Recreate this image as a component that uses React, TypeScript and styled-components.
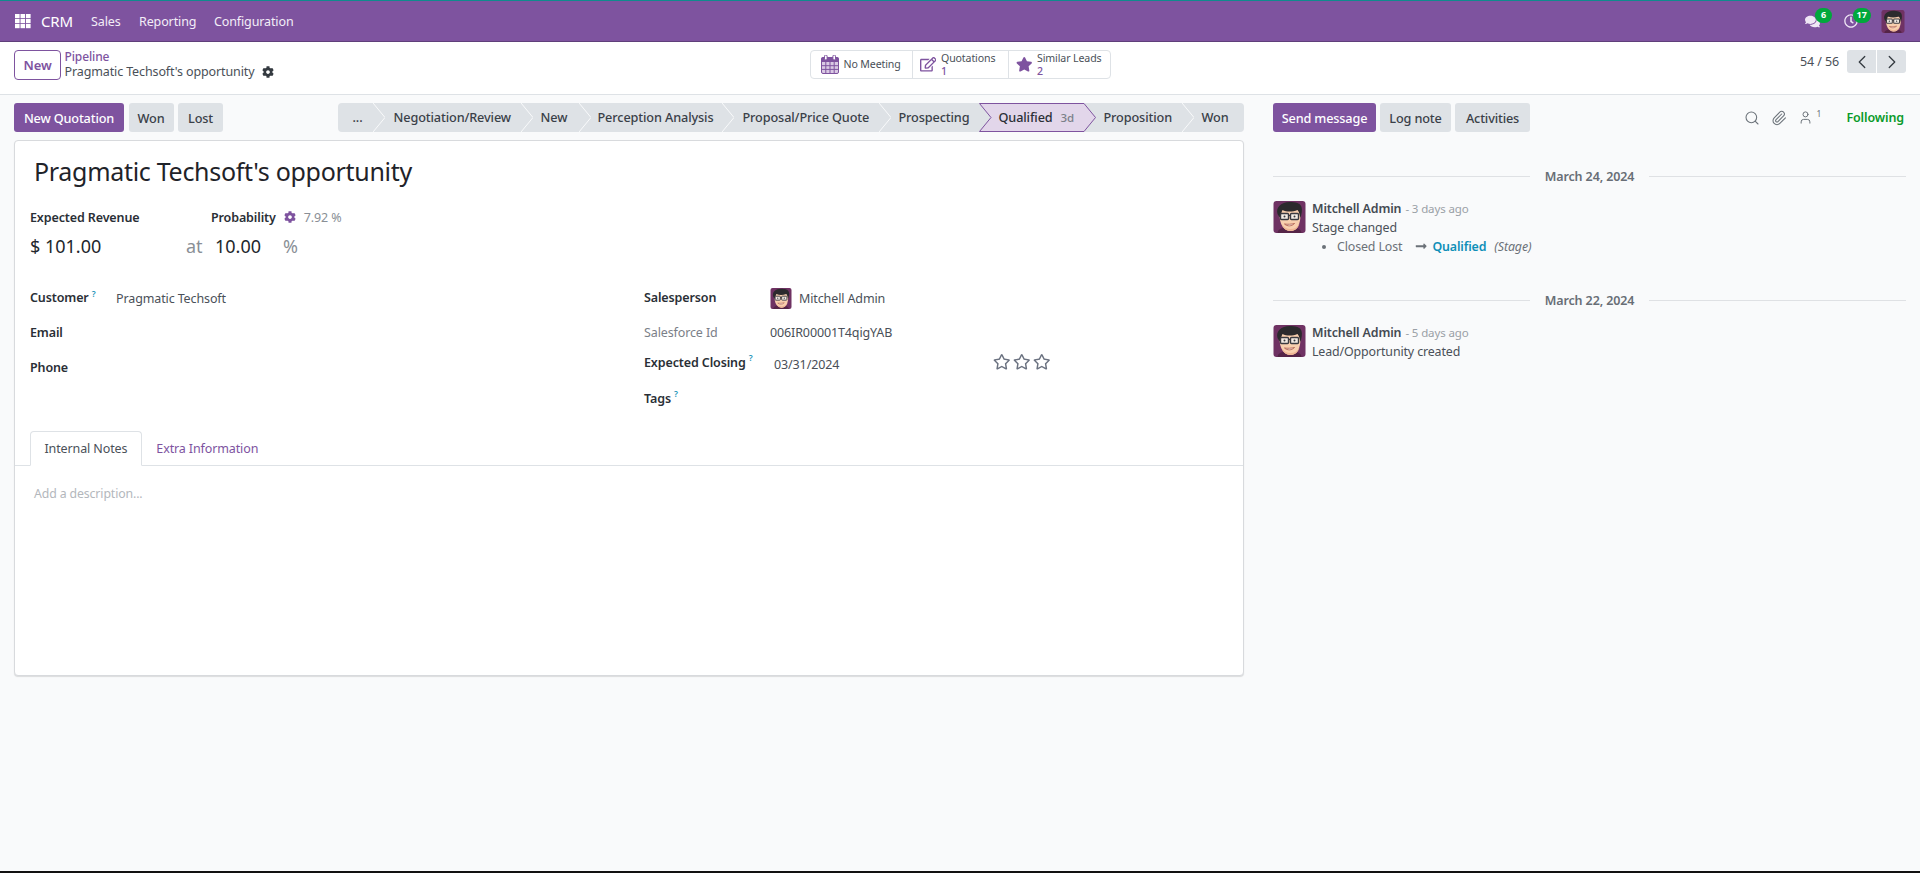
import React from "react";
import styled, { createGlobalStyle } from "styled-components";
import {
  FaRegEdit,
  FaStar,
  FaRegStar,
  FaCog,
  FaComments,
  FaRegClock,
  FaLongArrowAltRight,
} from "react-icons/fa";
import { ChevronLeft, ChevronRight, Search, Paperclip, User } from "lucide-react";

const PURPLE = "#7e539f";

const Global = createGlobalStyle`
  html, body { margin: 0; padding: 0; height: 100%; background: #f9fafb; }
  body {
    font-family: "Noto Sans", "Open Sans", sans-serif;
    font-size: 13px;
    letter-spacing: -0.12px;
    color: #4a5058;
  }
  * { box-sizing: border-box; }
`;

const Page = styled.div`
  width: 1920px;
  height: 873px;
  display: flex;
  flex-direction: column;
  overflow: hidden;
`;

/* ---------- navbar ---------- */
const Navbar = styled.header`
  height: 42px;
  flex: none;
  display: flex;
  align-items: center;
  background: ${PURPLE};
  border-top: 1px solid #0f8a8d;
  border-bottom: 1px solid #5f3f7a;
  color: #fff;
  padding: 0 15px;
`;
const AppsIcon = styled.svg`
  width: 16px;
  height: 15px;
  flex: none;
  margin-right: 10px;
`;
const Brand = styled.span`
  font-size: 15px;
  width: 50px;
  color: #fff;
`;
const NavItem = styled.span<{ $w: number }>`
  font-size: 12.5px;
  width: ${(p) => p.$w}px;
  color: #f3edf7;
`;
const NavRight = styled.div`
  margin-left: auto;
  display: flex;
  align-items: center;
`;
const SysIcon = styled.span<{ $w: number; $size: number }>`
  position: relative;
  width: ${(p) => p.$w}px;
  height: 24px;
  display: flex;
  align-items: center;
  color: #efe6f5;
  font-size: ${(p) => p.$size}px;
`;
const Badge = styled.span<{ $left: number; $w: number }>`
  position: absolute;
  left: ${(p) => p.$left}px;
  top: -1px;
  width: ${(p) => p.$w}px;
  height: 14.5px;
  border-radius: 8px;
  background: #00a83c;
  color: #fff;
  font-size: 9px;
  font-weight: 700;
  line-height: 14.5px;
  text-align: center;
  letter-spacing: 0;
`;

/* ---------- control panel ---------- */
const ControlPanel = styled.div`
  height: 53px;
  flex: none;
  display: grid;
  grid-template-columns: 1fr auto 1fr;
  background: #fff;
  border-bottom: 1px solid #dee2e6;
  padding: 8px 14px 0;
  align-items: start;
`;
const CpLeft = styled.div`
  display: flex;
  align-items: flex-start;
  gap: 3.5px;
`;
const NewButton = styled.button`
  width: 47px;
  height: 30px;
  background: #fff;
  border: 1px solid ${PURPLE};
  border-radius: 4px;
  color: ${PURPLE};
  font: 600 13px "Noto Sans", sans-serif;
  letter-spacing: -0.1px;
  padding: 0;
`;
const Breadcrumbs = styled.div`
  display: flex;
  flex-direction: column;
  line-height: 14.5px;
`;
const Crumb = styled.span`
  color: ${PURPLE};
  font-size: 12px;
  font-weight: 500;
`;
const CrumbTitle = styled.span`
  display: flex;
  align-items: center;
  gap: 8px;
  font-size: 12.5px;
  color: #4a5058;
  svg {
    color: #343a40;
    font-size: 12px;
  }
`;
const StatGroup = styled.div`
  display: flex;
  height: 29px;
  border: 1px solid #dee2e6;
  border-radius: 4px;
  width: 301px;
`;
const StatButton = styled.div<{ $w: number; $pl: number }>`
  width: ${(p) => p.$w}px;
  display: flex;
  align-items: center;
  gap: 5px;
  padding-left: ${(p) => p.$pl}px;
  font-size: 10.6px;
  line-height: 13px;
  color: #4a5058;
  white-space: nowrap;
  & + & {
    border-left: 1px solid #dee2e6;
  }
  svg {
    color: ${PURPLE};
    font-size: 16.5px;
    flex: none;
  }
`;
const CalendarIcon = styled.svg`
  width: 18px;
  height: 19px;
`;
const StatText = styled.span`
  display: flex;
  flex-direction: column;
`;
const StatValue = styled.span`
  color: ${PURPLE};
  font-weight: 500;
`;
const Pager = styled.div`
  display: flex;
  justify-content: flex-end;
  align-items: center;
  height: 23px;
  gap: 1px;
`;
const PagerText = styled.span`
  font-size: 12.5px;
  margin-right: 7px;
`;
const PagerButton = styled.button`
  width: 29px;
  height: 23px;
  border: 0;
  padding: 0;
  background: #dee2e6;
  color: #343a40;
  display: flex;
  align-items: center;
  justify-content: center;
  &:first-of-type {
    border-radius: 3px 0 0 3px;
  }
  &:last-of-type {
    border-radius: 0 3px 3px 0;
  }
`;

/* ---------- main ---------- */
const Main = styled.main`
  flex: 1;
  display: flex;
  gap: 29px;
  padding: 8px 14px 0;
  min-height: 0;
`;
const FormColumn = styled.section`
  width: 1230px;
  flex: none;
  display: flex;
  flex-direction: column;
  gap: 8px;
`;
const ActionRow = styled.div`
  display: flex;
  height: 29px;
  align-items: stretch;
`;
const Btn = styled.button<{ $primary?: boolean; $w: number; $gap?: number }>`
  width: ${(p) => p.$w}px;
  margin-right: ${(p) => p.$gap ?? 4}px;
  height: 29px;
  flex: none;
  border: 0;
  border-radius: 3px;
  padding: 0;
  background: ${(p) => (p.$primary ? PURPLE : "#dee2e6")};
  color: ${(p) => (p.$primary ? "#fff" : "#3a4048")};
  font: 500 12.7px "Noto Sans", sans-serif;
  letter-spacing: -0.15px;
`;
const StatusBar = styled.div`
  margin-left: auto;
  width: 906.5px;
  display: flex;
  background: #dee2e6;
  border-radius: 4px;
  height: 29px;
`;
const Stage = styled.span<{ $w: number; $pl?: number }>`
  width: ${(p) => p.$w}px;
  flex: none;
  padding-left: ${(p) => p.$pl ?? 8}px;
  line-height: 29px;
  font-weight: 500;
  font-size: 12.7px;
  color: #3a4048;
  white-space: nowrap;
`;
const Chevron = styled.svg`
  width: 12px;
  height: 29px;
  flex: none;
`;
const ActiveStage = styled.span`
  position: relative;
  width: 117px;
  flex: none;
  padding-left: 20px;
  line-height: 29px;
  font-weight: 500;
  font-size: 12.7px;
  color: #2a2f36;
  white-space: nowrap;
  display: flex;
  gap: 8px;
  > span {
    position: relative;
  }
`;
const ActiveShape = styled.svg`
  position: absolute;
  left: 0;
  top: 0;
  width: 117px;
  height: 29px;
`;
const Duration = styled.span`
  font-size: 11.5px;
  font-weight: 500;
  color: #7b8088;
`;

const Sheet = styled.div`
  height: 536px;
  flex: none;
  background: #fff;
  border: 1px solid #d8dadd;
  border-radius: 4px;
  box-shadow: 0 1px 1px rgba(0, 0, 0, 0.12);
  display: flex;
  flex-direction: column;
`;
const Title = styled.h1`
  margin: 12px 0 0 19px;
  height: 36px;
  font-size: 25px;
  font-weight: 400;
  line-height: 36px;
  color: #1f2329;
  letter-spacing: -0.3px;
`;
const KpiLabels = styled.div`
  margin: 19px 0 0 15px;
  display: flex;
  align-items: center;
  height: 18px;
`;
const KpiLabel = styled.span<{ $w?: number }>`
  width: ${(p) => (p.$w ? `${p.$w}px` : "auto")};
  font-weight: 600;
  color: #2a2f36;
  font-size: 12.5px;
`;
const ProbCog = styled.span`
  margin: 0 8px;
  color: ${PURPLE};
  font-size: 12px;
  display: flex;
`;
const ProbValue = styled.span`
  color: #8a8f96;
  font-size: 12.5px;
`;
const KpiValues = styled.div`
  margin: 7px 0 0 15px;
  display: flex;
  align-items: center;
  height: 26px;
  font-size: 18px;
  color: #22262c;
  letter-spacing: 0;
`;
const KpiCell = styled.span<{ $w: number; $muted?: boolean }>`
  width: ${(p) => p.$w}px;
  color: ${(p) => (p.$muted ? "#8a8f96" : "inherit")};
`;
const FieldGrid = styled.div`
  margin: 21px 0 0 15px;
  display: grid;
  grid-template-columns: 614px 1fr;
`;
const FieldColumn = styled.div`
  display: flex;
  flex-direction: column;
`;
const Field = styled.div<{ $h?: number }>`
  height: ${(p) => p.$h ?? 35}px;
  display: flex;
  align-items: center;
`;
const FieldLabel = styled.span<{ $w: number; $muted?: boolean }>`
  width: ${(p) => p.$w}px;
  flex: none;
  font-weight: ${(p) => (p.$muted ? 400 : 600)};
  color: ${(p) => (p.$muted ? "#7b8088" : "#2a2f36")};
  font-size: 12.5px;
`;
const Help = styled.sup`
  color: #1a93b8;
  font-size: 8.5px;
  font-weight: 600;
  margin-left: 3px;
  line-height: 0;
`;
const FieldValue = styled.span<{ $nudge?: number }>`
  display: flex;
  align-items: center;
  gap: 7px;
  font-size: 12.5px;
  color: #4a5058;
  margin-top: ${(p) => p.$nudge ?? 1}px;
  white-space: nowrap;
`;
const Stars = styled.span`
  display: flex;
  gap: 2.5px;
  margin-left: 154px;
  color: #6b7280;
  font-size: 17.5px;
`;
const Tabs = styled.div`
  margin-top: 9px;
  height: 35px;
  flex: none;
  display: flex;
  padding-left: 15px;
  border-bottom: 1px solid #dee2e6;
`;
const Tab = styled.span<{ $active?: boolean }>`
  height: 35px;
  padding: 0 13.5px;
  line-height: 33px;
  font-size: 12.5px;
  color: ${(p) => (p.$active ? "#4a5058" : PURPLE)};
  background: ${(p) => (p.$active ? "#fff" : "transparent")};
  border: 1px solid ${(p) => (p.$active ? "#dee2e6" : "transparent")};
  border-bottom-color: ${(p) => (p.$active ? "#fff" : "transparent")};
  border-radius: 4px 4px 0 0;
`;
const Description = styled.div`
  margin: 19px 0 0 19px;
  font-size: 12.3px;
  color: #b3b7bc;
`;

/* ---------- chatter ---------- */
const Chatter = styled.aside`
  flex: 1;
  display: flex;
  flex-direction: column;
  min-width: 0;
`;
const ChatterTop = styled.div`
  display: flex;
  height: 29px;
  align-items: center;
`;
const ChatterTools = styled.div`
  margin-left: auto;
  display: flex;
  align-items: center;
  color: #6c737a;
  font-size: 13px;
`;
const Tool = styled.span<{ $w: number }>`
  width: ${(p) => p.$w}px;
  display: flex;
  align-items: center;
`;
const Sup = styled.span`
  font-size: 8.5px;
  margin: -8px 0 0 3px;
`;
const Following = styled.span`
  color: #0a9a2a;
  font-weight: 600;
  font-size: 12.5px;
  margin-right: 2px;
`;
const DateSep = styled.div<{ $top: number }>`
  margin-top: ${(p) => p.$top}px;
  display: flex;
  align-items: center;
  gap: 15px;
  height: 18px;
  font-weight: 600;
  font-size: 12.5px;
  color: #686e76;
  white-space: nowrap;
  &::before,
  &::after {
    content: "";
    flex: 1;
    height: 1px;
    background: #dfe1e4;
  }
`;
const Message = styled.article`
  margin-top: 16px;
  display: flex;
  gap: 6px;
`;
const MsgBody = styled.div`
  display: flex;
  flex-direction: column;
  line-height: 19px;
  font-size: 12.4px;
  margin-top: -2px;
`;
const MsgHead = styled.div`
  display: flex;
  align-items: baseline;
  gap: 4px;
`;
const Author = styled.span`
  font-weight: 600;
  color: #444a52;
`;
const Ago = styled.span`
  color: #9aa0a6;
  font-size: 11.5px;
`;
const Tracking = styled.ul`
  margin: 0;
  padding: 0 0 0 25px;
  list-style: disc;
  li {
    color: #6b7178;
  }
`;
const TrackLine = styled.span`
  display: flex;
  align-items: center;
`;
const OldValue = styled.span`
  width: 78px;
  color: #6b7178;
`;
const NewValue = styled.span`
  color: #0f8fb8;
  font-weight: 600;
  margin-left: 5px;
`;
const FieldName = styled.em`
  color: #6b7178;
  margin-left: 8px;
`;
const AvatarSvg = styled.svg<{ $w: number; $h: number }>`
  width: ${(p) => p.$w}px;
  height: ${(p) => p.$h}px;
  flex: none;
  display: block;
`;
const BottomBar = styled.div`
  height: 2.5px;
  background: #111;
  flex: none;
`;

function Avatar({ w, h }: { w: number; h: number }) {
  return (
    <AvatarSvg $w={w} $h={h} viewBox="0 0 32 32">
      <rect width="32" height="32" rx="3" fill="#6f3263" />
      <path d="M4 32c0-3 3-5 7-5h10c4 0 7 2 7 5z" fill="#552447" />
      <path d="M6 13c0 10 4 17 11 17s10-7 10-17l-2-4H8z" fill="#f8cfae" />
      <path d="M8 23c2 5 5 7 9 7s7-2 9-7c-2 3-5 5-9 5s-7-2-9-5z" fill="#eeb594" />
      <path d="M4 13C2 6 8 1 16 1c6 0 11 1 12 5 1 3 0 7-1 11-1-3-1-6-3-8-5 2-11 2-15 0-1 2-2 5-2 8-1-1-2-2-3-4z" fill="#2b2a2d" />
      <rect x="7" y="12.5" width="8" height="6" rx="1" fill="#f3ece4" stroke="#3a3a40" strokeWidth="1.4" />
      <rect x="17" y="12.5" width="8" height="6" rx="1" fill="#f3ece4" stroke="#3a3a40" strokeWidth="1.4" />
      <path d="M15 14.5h2" stroke="#3a3a40" strokeWidth="1.2" />
      <circle cx="11" cy="15.5" r="1" fill="#3a3a40" />
      <circle cx="21" cy="15.5" r="1" fill="#3a3a40" />
      <path d="M11 23c3 2.6 7 2.4 10-.5-3 .8-7 1-10 .5z" fill="#fff" stroke="#a8503f" strokeWidth=".8" />
    </AvatarSvg>
  );
}

function Sep() {
  return (
    <Chevron viewBox="0 0 12 29">
      <polyline points="0,0 12,14.5 0,29" fill="none" stroke="#f9fafb" strokeWidth="1" />
    </Chevron>
  );
}

function Calendar() {
  return (
    <CalendarIcon viewBox="0 0 18 19">
      <rect x="0.5" y="2.5" width="17" height="16" rx="1.5" fill="#d9c9e4" stroke={PURPLE} />
      <rect x="0.5" y="2.5" width="17" height="4.5" fill={PURPLE} />
      <rect x="3.5" y="0" width="2.6" height="5" rx="1.2" fill="#fff" stroke={PURPLE} />
      <rect x="11.9" y="0" width="2.6" height="5" rx="1.2" fill="#fff" stroke={PURPLE} />
      <path d="M4.8 7v11M9 7v11M13.2 7v11M1 10.7h16M1 14.4h16" stroke={PURPLE} strokeWidth="1" />
    </CalendarIcon>
  );
}

export default function App() {
  return (
    <Page>
      <Global />
      <Navbar>
        <AppsIcon viewBox="0 0 16 15">
          {[0, 5.5, 11].map((x) =>
            [0, 5, 10].map((y) => <rect key={`${x}-${y}`} x={x} y={y} width="4.6" height="4.2" fill="#fff" />)
          )}
        </AppsIcon>
        <Brand>CRM</Brand>
        <NavItem $w={48}>Sales</NavItem>
        <NavItem $w={75}>Reporting</NavItem>
        <NavItem $w={90}>Configuration</NavItem>
        <NavRight>
          <SysIcon $w={39} $size={15}>
            <FaComments />
            <Badge $left={10} $w={17}>6</Badge>
          </SysIcon>
          <SysIcon $w={37} $size={14}>
            <FaRegClock />
            <Badge $left={8.5} $w={18.5}>17</Badge>
          </SysIcon>
          <Avatar w={24} h={23} />
        </NavRight>
      </Navbar>

      <ControlPanel>
        <CpLeft>
          <NewButton>New</NewButton>
          <Breadcrumbs>
            <Crumb>Pipeline</Crumb>
            <CrumbTitle>
              Pragmatic Techsoft's opportunity
              <FaCog />
            </CrumbTitle>
          </Breadcrumbs>
        </CpLeft>
        <StatGroup>
          <StatButton $w={101} $pl={10}>
            <Calendar />
            No Meeting
          </StatButton>
          <StatButton $w={96} $pl={7}>
            <FaRegEdit />
            <StatText>
              Quotations
              <StatValue>1</StatValue>
            </StatText>
          </StatButton>
          <StatButton $w={102} $pl={7}>
            <FaStar />
            <StatText>
              Similar Leads
              <StatValue>2</StatValue>
            </StatText>
          </StatButton>
        </StatGroup>
        <Pager>
          <PagerText>54 / 56</PagerText>
          <PagerButton>
            <ChevronLeft size={22} strokeWidth={1.4} />
          </PagerButton>
          <PagerButton>
            <ChevronRight size={22} strokeWidth={1.4} />
          </PagerButton>
        </Pager>
      </ControlPanel>

      <Main>
        <FormColumn>
          <ActionRow>
            <Btn $primary $w={110} $gap={4.5}>New Quotation</Btn>
            <Btn $w={45} $gap={4.5}>Won</Btn>
            <Btn $w={45} $gap={0}>Lost</Btn>
            <StatusBar>
              <Stage $w={35} $pl={15}>...</Stage>
              <Sep />
              <Stage $w={136} $pl={9}>Negotiation/Review</Stage>
              <Sep />
              <Stage $w={46}>New</Stage>
              <Sep />
              <Stage $w={131} $pl={7}>Perception Analysis</Stage>
              <Sep />
              <Stage $w={145} $pl={9}>Proposal/Price Quote</Stage>
              <Sep />
              <Stage $w={88}>Prospecting</Stage>
              <ActiveStage>
                <ActiveShape viewBox="0 0 117 29">
                  <polygon
                    points="0.5,0.5 105,0.5 116.5,14.5 105,28.5 0.5,28.5 12,14.5"
                    fill="#e2d6ea"
                    stroke={PURPLE}
                    strokeWidth="1"
                  />
                </ActiveShape>
                <span>Qualified</span>
                <Duration as="span">3d</Duration>
              </ActiveStage>
              <Stage $w={86}>Proposition</Stage>
              <Sep />
              <Stage $w={49.5}>Won</Stage>
            </StatusBar>
          </ActionRow>

          <Sheet>
            <Title>Pragmatic Techsoft's opportunity</Title>
            <KpiLabels>
              <KpiLabel $w={181}>Expected Revenue</KpiLabel>
              <KpiLabel>Probability</KpiLabel>
              <ProbCog>
                <FaCog />
              </ProbCog>
              <ProbValue>7.92 %</ProbValue>
            </KpiLabels>
            <KpiValues>
              <KpiCell $w={156}>$ 101.00</KpiCell>
              <KpiCell $w={29} $muted>at</KpiCell>
              <KpiCell $w={68}>10.00</KpiCell>
              <KpiCell $w={20} $muted>%</KpiCell>
            </KpiValues>
            <FieldGrid>
              <FieldColumn>
                <Field>
                  <FieldLabel $w={86}>Customer<Help>?</Help></FieldLabel>
                  <FieldValue>Pragmatic Techsoft</FieldValue>
                </Field>
                <Field>
                  <FieldLabel $w={86}>Email</FieldLabel>
                </Field>
                <Field>
                  <FieldLabel $w={86}>Phone</FieldLabel>
                </Field>
              </FieldColumn>
              <FieldColumn>
                <Field>
                  <FieldLabel $w={126}>Salesperson</FieldLabel>
                  <FieldValue>
                    <Avatar w={22} h={21} />
                    Mitchell Admin
                  </FieldValue>
                </Field>
                <Field>
                  <FieldLabel $w={126} $muted>Salesforce Id</FieldLabel>
                  <FieldValue $nudge={0}>006IR00001T4qigYAB</FieldValue>
                </Field>
                <Field $h={24}>
                  <FieldLabel $w={130}>Expected Closing<Help>?</Help></FieldLabel>
                  <FieldValue $nudge={4}>03/31/2024</FieldValue>
                  <Stars>
                    <FaRegStar />
                    <FaRegStar />
                    <FaRegStar />
                  </Stars>
                </Field>
                <Field $h={48}>
                  <FieldLabel $w={126}>Tags<Help>?</Help></FieldLabel>
                </Field>
              </FieldColumn>
            </FieldGrid>
            <Tabs>
              <Tab $active>Internal Notes</Tab>
              <Tab>Extra Information</Tab>
            </Tabs>
            <Description>Add a description...</Description>
          </Sheet>
        </FormColumn>

        <Chatter>
          <ChatterTop>
            <Btn $primary $w={103}>Send message</Btn>
            <Btn $w={71}>Log note</Btn>
            <Btn $w={75} $gap={0}>Activities</Btn>
            <ChatterTools>
              <Tool $w={27}><Search size={16} strokeWidth={1.6} /></Tool>
              <Tool $w={27}><Paperclip size={16} strokeWidth={1.6} /></Tool>
              <Tool $w={48}>
                <User size={15} strokeWidth={1.6} />
                <Sup>1</Sup>
              </Tool>
              <Following>Following</Following>
            </ChatterTools>
          </ChatterTop>
          <DateSep $top={35}>March 24, 2024</DateSep>
          <Message>
            <Avatar w={33} h={32} />
            <MsgBody>
              <MsgHead>
                <Author>Mitchell Admin</Author>
                <Ago>- 3 days ago</Ago>
              </MsgHead>
              Stage changed
              <Tracking>
                <li>
                  <TrackLine>
                    <OldValue>Closed Lost</OldValue>
                    <FaLongArrowAltRight />
                    <NewValue>Qualified</NewValue>
                    <FieldName>(Stage)</FieldName>
                  </TrackLine>
                </li>
              </Tracking>
            </MsgBody>
          </Message>
          <DateSep $top={35}>March 22, 2024</DateSep>
          <Message>
            <Avatar w={33} h={32} />
            <MsgBody>
              <MsgHead>
                <Author>Mitchell Admin</Author>
                <Ago>- 5 days ago</Ago>
              </MsgHead>
              Lead/Opportunity created
            </MsgBody>
          </Message>
        </Chatter>
      </Main>
      <BottomBar />
    </Page>
  );
}
